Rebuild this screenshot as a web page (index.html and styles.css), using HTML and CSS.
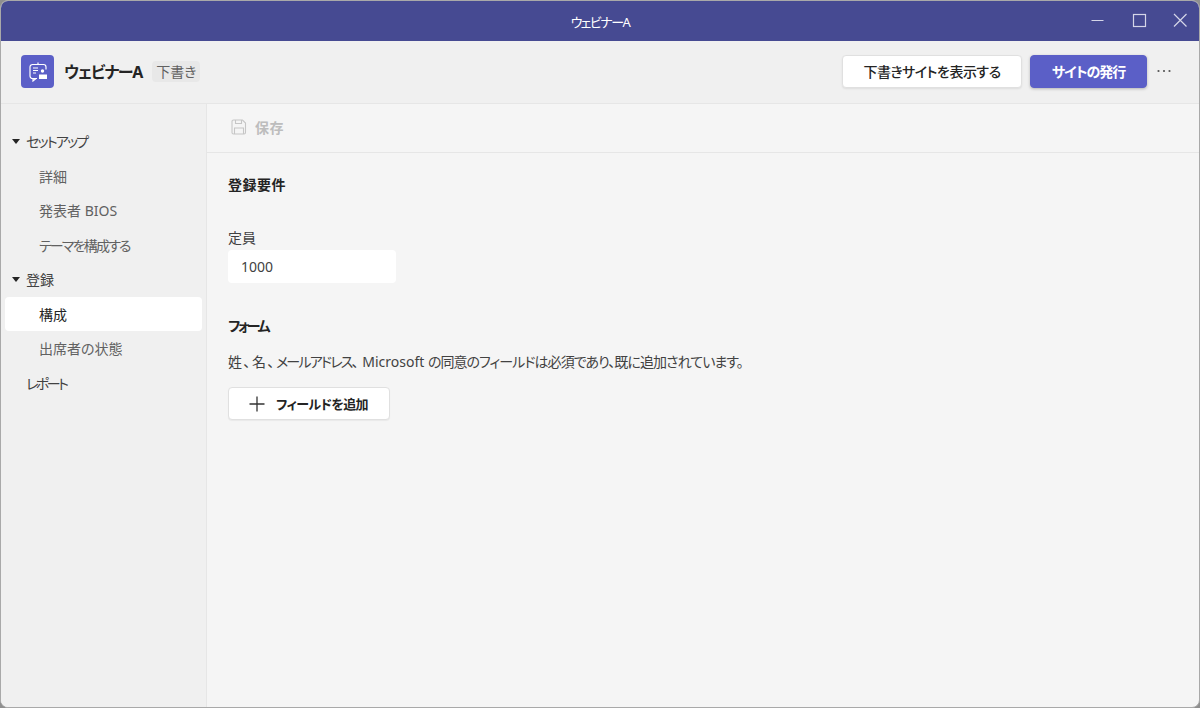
FILE: index.html
```html
<!DOCTYPE html>
<html lang="ja">

<head>
    <meta charset="UTF-8">
    <title>ウェビナーA</title>
    <link rel="stylesheet" href="styles.css">
</head>

<body>
    <div class="window">
        <div class="titlebar">
            <span class="win-title">ウェビナーA</span>
            <div class="win-controls">
                <svg width="16" height="16" viewBox="0 0 16 16"><path d="M1.500 8.500h12" stroke="#d5d6e8" stroke-width="1.200" fill="none"/></svg>
                <svg width="16" height="16" viewBox="0 0 16 16"><rect x="2.500" y="2.500" width="12" height="12" stroke="#d5d6e8" stroke-width="1.200" fill="none"/></svg>
                <svg width="16" height="16" viewBox="0 0 16 16"><path d="M2 2l12.500 12.500M14.500 2L2 14.500" stroke="#d5d6e8" stroke-width="1.200" fill="none"/></svg>
            </div>
        </div>

        <div class="header">
            <div class="app-icon">
                <svg width="22" height="22" viewBox="0 0 22 22" fill="none">
                    <path d="M11 2.500v2M5.500 4.500h11a2.500 2.500 0 0 1 2.500 2.500v2.500M10 18.500H5.500a2.500 2.500 0 0 1-2.500-2.500V7a2.500 2.500 0 0 1 2.500-2.500M6 18.500v2.500l3-2.500" stroke="#fff" stroke-width="1.200"/>
                    <path d="M6 8h5M6 10.500h5M6 13h3" stroke="#fff" stroke-width="1.200"/>
                    <circle cx="15.500" cy="11" r="1.700" fill="#fff"/>
                    <path d="M12 14.500h8v4.500h-8z" fill="#fff"/>
                </svg>
            </div>
            <span class="event-name">ウェビナーA</span>
            <span class="draft-tag">下書き</span>
            <div class="header-actions">
                <button class="btn btn-preview">下書きサイトを表示する</button>
                <button class="btn btn-publish">サイトの発行</button>
                <span class="more">
                    <svg width="16" height="4" viewBox="0 0 16 4"><circle cx="2.500" cy="2" r="1.100" fill="#555"/><circle cx="8" cy="2" r="1.100" fill="#555"/><circle cx="13.500" cy="2" r="1.100" fill="#555"/></svg>
                </span>
            </div>
        </div>

        <div class="main">
            <div class="sidebar">
                <div class="nav-group"><span class="caret"></span><span class="kana-tight">セットアップ</span></div>
                <div class="nav-item">詳細</div>
                <div class="nav-item">発表者 BIOS</div>
                <div class="nav-item"><span class="kana">テーマを構成する</span></div>
                <div class="nav-group"><span class="caret"></span>登録</div>
                <div class="nav-item active">構成</div>
                <div class="nav-item">出席者の状態</div>
                <div class="nav-group"><span class="kana-tighter">レポート</span></div>
            </div>

            <div class="content">
                <div class="toolbar">
                    <svg width="16" height="16" viewBox="0 0 16 16" fill="none" stroke="#c6c6c6" stroke-width="1.100">
                        <path d="M2.500 1h9l3 3v9.500a1.500 1.500 0 0 1-1.500 1.500h-10.500a1.500 1.500 0 0 1-1.500-1.500v-11a1.500 1.500 0 0 1 1.500-1.500z"/>
                        <path d="M4.500 1v3.500h6V1M3.500 15V9h9v6"/>
                    </svg>
                    <span class="save">保存</span>
                </div>
                <div class="panel">
                    <h3 class="section-title">登録要件</h3>
                    <label class="field-label">定員</label>
                    <div class="input">1000</div>
                    <h3 class="section-title form-title"><span class="kana-tighter">フォーム</span></h3>
                    <p class="note"><span class="wide">姓、名、</span><span class="kana">メールアドレス</span>、 Microsoft <span class="rest">の同意のフィールドは必須であり、既に追加されています。</span></p>
                    <button class="btn btn-add">
                        <svg width="16" height="16" viewBox="0 0 16 16"><path d="M8 .5v15M.5 8h15" stroke="#333" stroke-width="1.300" fill="none"/></svg>
                        <span class="add-label">フィールドを追加</span>
                    </button>
                </div>
            </div>
        </div>
    </div>
</body>

</html>
```

FILE: styles.css
```css
* {
    margin: 0;
    padding: 0;
    box-sizing: border-box;
    font-family: "Noto Sans", "Noto Sans CJK JP", sans-serif;
    font-feature-settings: "palt";
}

html, body {
    height: 100%;
    background: #8f8f8f;
}

/* the japanese UI font in the screenshot has much narrower kana */
.kana {
    letter-spacing: -1.800px;
}

.kana-tight {
    letter-spacing: -1.800px;
}

.kana-tighter {
    letter-spacing: -2.500px;
}

.wide {
    letter-spacing: 1.500px;
}

.rest {
    letter-spacing: -.95px;
}

.window {
    height: 708px;
    display: flex;
    flex-direction: column;
    border: 1px solid #a9a9a9;
    border-radius: 8px;
    overflow: hidden;
    background: #f5f5f5;
    color: #242424;
}

.titlebar {
    height: 40px;
    flex: none;
    background: #464a92;
    display: flex;
    align-items: center;
    justify-content: center;
    position: relative;
}

.win-title {
    color: #fff;
    font-size: 13px;
    letter-spacing: -1.500px;
}

.win-controls {
    position: absolute;
    top: 11px;
    right: 11px;
    display: flex;
    gap: 25px;
}

.header {
    height: 63px;
    flex: none;
    display: flex;
    align-items: center;
    padding: 0 20px 2px;
    background: #f0f0f0;
    border-bottom: 1px solid #e6e6e6;
}

.app-icon {
    width: 33px;
    height: 33px;
    border-radius: 4px;
    background: #5b5fc7;
    display: flex;
    align-items: center;
    justify-content: center;
}

.event-name {
    margin-left: 10px;
    font-size: 16px;
    font-weight: 700;
    letter-spacing: -1.200px;
}

.draft-tag {
    margin-left: 10px;
    padding: 0 4px;
    height: 21px;
    line-height: 21px;
    font-size: 14px;
    color: #616161;
    background: #e8e8e8;
    border-radius: 4px;
}

.header-actions {
    margin-left: auto;
    display: flex;
    align-items: center;
    gap: 8px;
}

.btn {
    height: 33px;
    border-radius: 4px;
    font-size: 14px;
    font-weight: 500;
    border: 1px solid #e0e0e0;
    background: #fff;
    color: #242424;
}

.btn-preview {
    width: 180px;
    letter-spacing: -.5px;
    box-shadow: 0 1px 2px rgba(0, 0, 0, .08);
}

.btn-publish {
    width: 117px;
    background: #5b5fc7;
    border-color: #5b5fc7;
    color: #fff;
    font-weight: 700;
    letter-spacing: -1px;
    box-shadow: 0 1px 3px rgba(0, 0, 0, .25);
}

.more {
    margin-left: 1px;
    width: 16px;
    display: flex;
    margin-right: 7px;
}

.main {
    flex: 1;
    display: flex;
    min-height: 0;
}

.sidebar {
    width: 206px;
    flex: none;
    padding: 20px 4px 0;
    background: #f0f0f0;
    border-right: 1px solid #e6e6e6;
}

.nav-group, .nav-item {
    height: 34.500px;
    display: flex;
    align-items: center;
    font-size: 14px;
    border-radius: 4px;
}

.nav-group {
    padding-left: 21px;
    color: #424242;
    position: relative;
}

.caret {
    position: absolute;
    left: 7px;
    top: 15px;
    border-left: 4px solid transparent;
    border-right: 4px solid transparent;
    border-top: 5px solid #242424;
}

.nav-item {
    padding-left: 34px;
    color: #616161;
}

.nav-item.active {
    background: #fff;
    color: #242424;
}

.content {
    flex: 1;
    display: flex;
    flex-direction: column;
}

.toolbar {
    height: 49px;
    flex: none;
    display: flex;
    align-items: center;
    gap: 8px;
    padding: 0 0 2px 24px;
    border-bottom: 1px solid #e6e6e6;
}

.save {
    font-size: 14px;
    font-weight: 700;
    color: #bdbdbd;
    letter-spacing: .5px;
}

.panel {
    padding: 22px 21px;
}

.section-title {
    font-size: 14px;
    font-weight: 700;
    line-height: 20px;
    letter-spacing: .5px;
}

.form-title {
    margin-top: 33px;
}

.field-label {
    display: block;
    margin-top: 33px;
    font-size: 14px;
    line-height: 20px;
    color: #424242;
}

.input {
    margin-top: 2px;
    width: 168px;
    height: 33px;
    line-height: 33px;
    padding-left: 13px;
    font-size: 14px;
    background: #fff;
    border-radius: 4px;
    color: #424242;
}

.note {
    margin-top: 16px;
    font-size: 14px;
    line-height: 20px;
    color: #424242;
}

.btn-add {
    margin-top: 15px;
    width: 162px;
    display: flex;
    align-items: center;
    gap: 11px;
    padding-left: 20px;
    font-size: 13px;
    font-weight: 700;
    box-shadow: 0 1px 1px rgba(0, 0, 0, .05);
}

.add-label {
    letter-spacing: -.6px;
}
```
